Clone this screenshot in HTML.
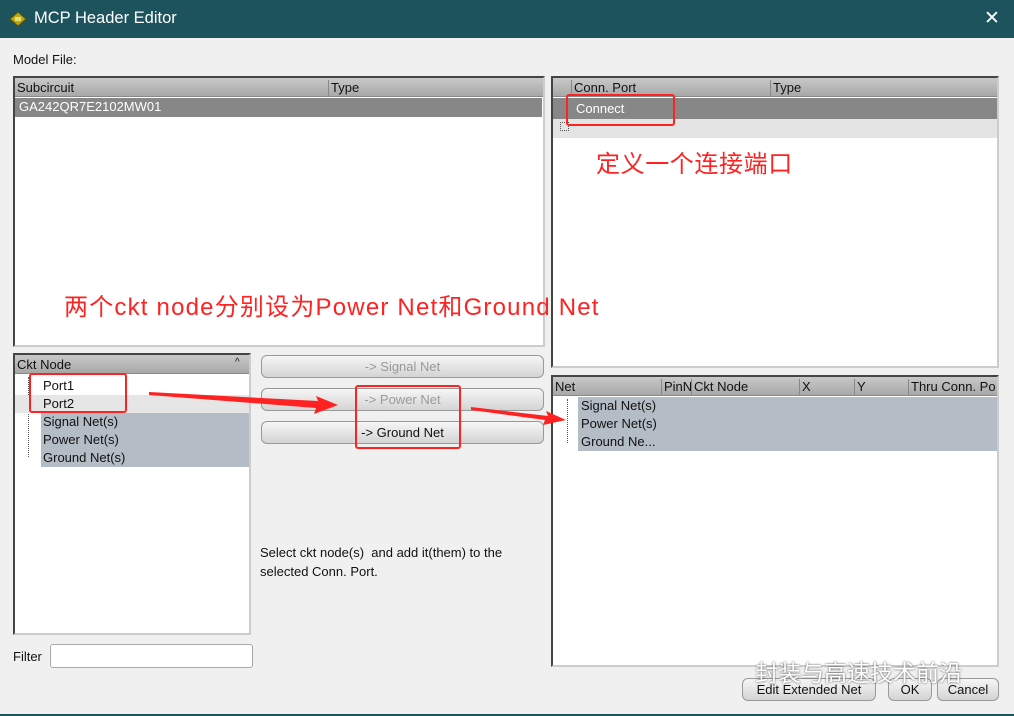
<!DOCTYPE html><html><head><meta charset="utf-8"><style>
*{box-sizing:border-box}body{margin:0;width:1014px;height:716px;overflow:hidden;background:#f0f0f0;font-family:"Liberation Sans","Noto Sans CJK SC",sans-serif;font-size:13px;color:#111;position:relative}
.a{position:absolute}
.title{left:0;top:0;width:1014px;height:38px;background:#1d535d;color:#fff;font-size:16px}
.panel{border:2px solid #444;border-right-color:#ccc;border-bottom-color:#ccc;background:#fff;overflow:hidden}
.hdr{position:absolute;left:0;top:0;right:0;height:19px;background:linear-gradient(#c8c8c8,#a8a8a8);border-bottom:1px solid #888}
.hdr span{position:absolute;top:2px;border-left:1px solid #888;padding-left:2px;height:17px}
.btn{position:absolute;border:1px solid #999;border-radius:6px;background:linear-gradient(#f6f6f6,#d4d4d4);text-align:center;line-height:21px;font-size:13px}
.red{position:absolute;border:2.5px solid #f22;border-radius:3px}
.row{position:absolute;height:18px;line-height:18px}
</style></head><body>
<div class="a title"><svg class="a" style="left:9px;top:11px" width="18" height="16"><polygon points="9,1 17,8 9,15 1,8" fill="#b8a81a" stroke="#5a5000"/><rect x="6" y="6" width="6" height="4" fill="#e8e070"/></svg><span class="a" style="left:34px;top:9px;font-size:16.5px">MCP Header Editor</span><span class="a" style="left:984px;top:7px;font-size:19px">✕</span></div>
<div class="a" style="left:13px;top:52px">Model File:</div>
<div class="a panel" style="left:13px;top:76px;width:532px;height:271px"><div class="hdr"><span style="left:0;border:0">Subcircuit</span><span style="left:313px">Type</span></div><div class="row" style="left:0;top:20px;width:527px;height:19px;background:#878787;color:#fff;padding-left:4px">GA242QR7E2102MW01</div></div>
<div class="a panel" style="left:551px;top:76px;width:448px;height:292px"><div class="hdr"><span style="left:18px">Conn. Port</span><span style="left:217px">Type</span></div><div class="row" style="left:0;top:20px;width:444px;height:21px;background:#878787;color:#fff;padding-left:23px;line-height:21px">Connect</div><div class="row" style="left:0;top:41px;width:444px;height:19px;background:#e4e4e4"></div><div class="a" style="left:7px;top:44px;width:9px;height:9px;border:1px dotted #555"></div></div>
<div class="a panel" style="left:13px;top:353px;width:238px;height:282px"><div class="hdr"><span style="left:0;border:0">Ckt Node</span><span style="left:218px;border:0;font-size:10px">^</span></div>
<div class="a" style="left:13px;top:22px;height:80px;border-left:1px dotted #555"></div>
<div class="row" style="left:26px;top:22px;width:208px;background:#fff;padding-left:2px">Port1</div>
<div class="row" style="left:0;top:40px;width:234px;background:#e6e6e6"></div><div class="row" style="left:26px;top:40px;padding-left:2px">Port2</div>
<div class="row" style="left:26px;top:58px;width:208px;height:54px;background:#b4bcc6"></div>
<div class="row" style="left:28px;top:58px">Signal Net(s)</div><div class="row" style="left:28px;top:76px">Power Net(s)</div><div class="row" style="left:28px;top:94px">Ground Net(s)</div></div>
<div class="btn" style="left:261px;top:355px;width:283px;height:23px;color:#999">-&gt; Signal Net</div>
<div class="btn" style="left:261px;top:388px;width:283px;height:23px;color:#999">-&gt; Power Net</div>
<div class="btn" style="left:261px;top:421px;width:283px;height:23px">-&gt; Ground Net</div>
<div class="a" style="left:260px;top:543px;line-height:19px">Select ckt node(s)&nbsp; and add it(them) to the<br>selected Conn. Port.</div>
<div class="a panel" style="left:551px;top:375px;width:448px;height:292px"><div class="hdr"><span style="left:0;border:0">Net</span><span style="left:108px">PinN</span><span style="left:138px">Ckt Node</span><span style="left:246px">X</span><span style="left:301px">Y</span><span style="left:355px">Thru Conn. Po</span></div>
<div class="row" style="left:25px;top:20px;width:419px;height:54px;background:#b4bcc6"></div>
<div class="a" style="left:14px;top:22px;height:44px;border-left:1px dotted #555"></div>
<div class="row" style="left:28px;top:20px">Signal Net(s)</div><div class="row" style="left:28px;top:38px">Power Net(s)</div><div class="row" style="left:28px;top:56px">Ground Ne...</div></div>
<div class="a" style="left:13px;top:649px">Filter</div>
<div class="a" style="left:50px;top:644px;width:203px;height:24px;background:#fff;border:1px solid #aaa;border-radius:3px"></div>
<div class="btn" style="left:742px;top:678px;width:134px;height:23px">Edit Extended Net</div>
<div class="btn" style="left:888px;top:678px;width:44px;height:23px">OK</div>
<div class="btn" style="left:937px;top:678px;width:62px;height:23px">Cancel</div>
<div class="a" style="left:755px;top:654px;font-size:23px;color:#fff;text-shadow:0 0 2px #444">封装与高速技术前沿</div>
<div class="a" style="left:0;top:714px;width:1014px;height:2px;background:#1d535d"></div>
<div class="red" style="left:566px;top:94px;width:109px;height:32px"></div>
<div class="red" style="left:29px;top:373px;width:98px;height:40px"></div>
<div class="red" style="left:355px;top:385px;width:106px;height:64px"></div>
<div class="a" style="left:596px;top:144px;color:#f22;font-size:24px;letter-spacing:0.6px">定义一个连接端口</div>
<div class="a" style="left:64px;top:287px;color:#f22;font-size:24px;letter-spacing:1.2px">两个ckt node分别设为Power Net和Ground Net</div>
<svg class="a" style="left:0;top:0" width="1014" height="716"><g fill="#f22"><polygon points="149,392 318,401 316,396 338,405 314,414 316,408 149,395"/><polygon points="471,407 548,416 546,411 566,420 543,425 545,420 471,410"/></g></svg>
</body></html>
